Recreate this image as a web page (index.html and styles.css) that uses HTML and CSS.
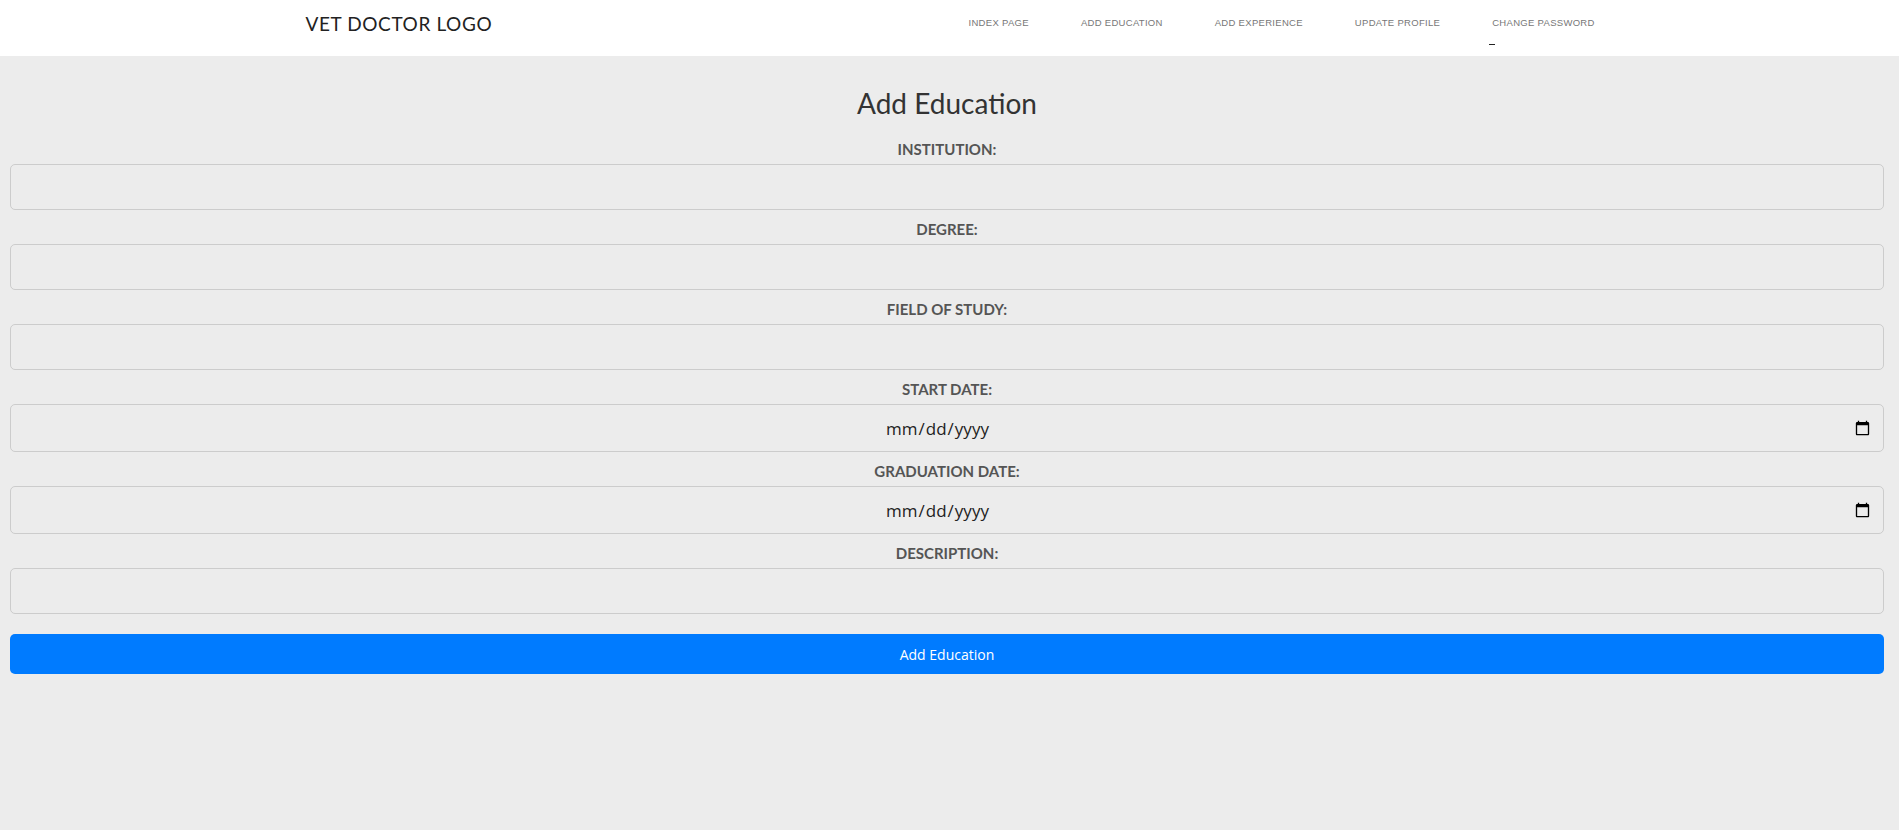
FILE: index.html
```html
<!DOCTYPE html>
<html lang="en">
<head>
<meta charset="utf-8">
<title>Add Education</title>
<link rel="stylesheet" href="styles.css">
</head>
<body>
<header class="topbar">
  <div class="topbar-inner">
    <div class="logo">VET DOCTOR LOGO</div>
    <nav class="nav">
      <ul class="nav-list">
        <li><a href="#">INDEX PAGE</a></li>
        <li><a href="#">ADD EDUCATION</a></li>
        <li><a href="#">ADD EXPERIENCE</a></li>
        <li><a href="#">UPDATE PROFILE</a></li>
        <li><a href="#">CHANGE PASSWORD</a><span class="dash"></span></li>
      </ul>
    </nav>
  </div>
</header>
<main class="page">
  <h2 class="title">Add Education</h2>
  <form class="form">
    <div class="group">
      <label class="label" for="institution">INSTITUTION:</label>
      <input class="field" id="institution" type="text">
    </div>
    <div class="group">
      <label class="label" for="degree">DEGREE:</label>
      <input class="field" id="degree" type="text">
    </div>
    <div class="group">
      <label class="label" for="field">FIELD OF STUDY:</label>
      <input class="field" id="field" type="text">
    </div>
    <div class="group">
      <label class="label" for="start">START DATE:</label>
      <input class="field date" id="start" type="date">
    </div>
    <div class="group">
      <label class="label" for="grad">GRADUATION DATE:</label>
      <input class="field date" id="grad" type="date">
    </div>
    <div class="group">
      <label class="label" for="desc">DESCRIPTION:</label>
      <input class="field" id="desc" type="text">
    </div>
    <button class="submit" type="button">Add Education</button>
  </form>
</main>
</body>
</html>
```
FILE: styles.css
```css
* { box-sizing: border-box; }
html, body { margin: 0; padding: 0; }
body {
  background: #ececec;
  font-family: Lato, "Open Sans", sans-serif;
  color: #333;
  min-height: 830px;
}
.topbar {
  background: #fff;
  height: 56px;
}
.topbar-inner {
  max-width: 1320px;
  margin: 0 auto;
  padding: 11px 15px 0 15px;
  display: flex;
  align-items: flex-start;
}
.logo {
  flex: 0 0 638px;
  font-family: Lato, sans-serif;
  font-size: 19px;
  line-height: 24px;
  letter-spacing: 0.6px;
  color: #222;
  padding-left: 1px;
  padding-top: 1px;
}
.nav { display: block; flex: 0 0 auto; }
.nav-list {
  list-style: none;
  margin: 0;
  padding: 0;
  display: flex;
  flex-wrap: nowrap;
}
.nav-list li { display: flex; flex-direction: column; flex: 0 0 auto; }
.nav-list a {
  display: block;
  padding: 0 26px;
  font-family: "Liberation Sans", Arial, sans-serif;
  font-size: 9.5px;
  line-height: 24px;
  letter-spacing: 0.3px;
  white-space: nowrap;
  color: #777;
  text-decoration: none;
}
.dash {
  display: block;
  width: 6px;
  height: 1px;
  margin: 9px 0 0 23px;
  background: #222;
}
.page {
  padding: 0 15px 0 10px;
}
.title {
  margin: 0;
  padding-top: 30px;
  text-align: center;
  font-weight: 400;
  font-size: 28px;
  line-height: 34px;
  color: #333;
}
.form { margin-top: 19px; }
.group { margin-bottom: 9px; }
.label {
  display: block;
  text-align: center;
  font-weight: 700;
  font-size: 15px;
  line-height: 20px;
  color: #555;
  margin-bottom: 5px;
}
.field {
  display: block;
  width: 100%;
  height: 46px;
  margin: 0;
  border: 1px solid #ccc;
  border-radius: 5px;
  background: #ececec;
  font-family: "Open Sans", sans-serif;
  font-size: 17px;
  color: #222;
  padding: 0 12px;
  text-align: center;
}
.field.date { height: 48px; padding-right: 10px; }
.submit {
  display: block;
  width: 100%;
  height: 40px;
  margin-top: 20px;
  border: none;
  border-radius: 5px;
  background: #007bff;
  color: #fff;
  font-family: "Open Sans", sans-serif;
  font-size: 14px;
  cursor: pointer;
}
```
